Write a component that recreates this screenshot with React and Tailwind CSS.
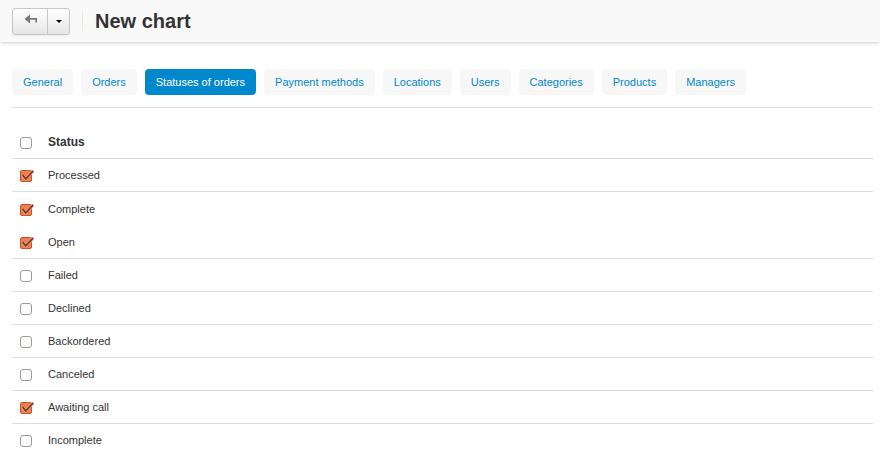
import { useState } from "react";

const tabs = [
  "General",
  "Orders",
  "Statuses of orders",
  "Payment methods",
  "Locations",
  "Users",
  "Categories",
  "Products",
  "Managers",
];

const statuses = [
  { name: "Processed", checked: true },
  { name: "Complete", checked: true, joined: true },
  { name: "Open", checked: true, tall: true },
  { name: "Failed", checked: false },
  { name: "Declined", checked: false },
  { name: "Backordered", checked: false },
  { name: "Canceled", checked: false },
  { name: "Awaiting call", checked: true },
  { name: "Incomplete", checked: false },
];

function CheckBox({ id, label, checked, onChange }) {
  return (
    <span className="relative block h-3 w-4">
      <input
        id={id}
        type="checkbox"
        aria-label={label}
        checked={checked}
        onChange={onChange}
        className="block size-3 appearance-none rounded-[3px] border border-[#9c9a94] bg-white checked:rounded-[2px] checked:border-[#c8532b] checked:bg-[#f47b4e]"
      />
      {checked && (
        <svg
          viewBox="0 0 16 12"
          className="pointer-events-none absolute left-0 top-0 h-3 w-4"
          fill="none"
          aria-hidden="true"
        >
          <path d="M2.6 5.4 L5.8 9 L13 1" stroke="#f9ab8b" strokeWidth="3" />
          <path d="M2.6 5.2 L5.8 8.8 L13.2 0.8" stroke="#70402f" strokeWidth="1.8" />
        </svg>
      )}
    </span>
  );
}

export default function App() {
  const [active, setActive] = useState("Statuses of orders");
  const [rows, setRows] = useState(statuses);
  const allChecked = rows.every((r) => r.checked);

  const toggle = (name) =>
    setRows(rows.map((r) => (r.name === name ? { ...r, checked: !r.checked } : r)));
  const toggleAll = () => setRows(rows.map((r) => ({ ...r, checked: !allChecked })));

  return (
    <div className="bg-white font-['Liberation_Sans',Arial,sans-serif] text-[11px] leading-4 text-[#333]">
      <header className="flex h-[42px] items-center bg-[#f9f9f9] pl-3 shadow-[0_1px_4px_rgba(0,0,0,0.2)]">
        <div className="flex h-[27px] rounded-[3px] border border-[#c5c5c5] bg-linear-to-b from-white to-[#e6e6e6] shadow-[0_1px_2px_rgba(0,0,0,0.05)]">
          <button
            type="button"
            aria-label="Back"
            className="flex w-[35px] items-center justify-center border-r border-[#c5c5c5] pb-1 pl-px"
          >
            <svg viewBox="0 0 14 10" className="h-[10px] w-[14px]" aria-hidden="true">
              <path d="M0.5 5 L6 0.5 V4 H13 V8.5 H11.4 V5.8 H6 V9.5 Z" fill="#777" />
            </svg>
          </button>
          <button
            type="button"
            aria-label="More options"
            className="flex w-[21px] items-center justify-center"
          >
            <svg viewBox="0 0 6 3" className="h-[3px] w-[6px]" aria-hidden="true">
              <path d="M0 0 H6 L3 3 Z" fill="#000" />
            </svg>
          </button>
        </div>
        <div className="ml-3 h-8 w-px bg-linear-to-b from-[#f9f9f9] via-[#e2e2e2] to-[#f9f9f9]" />
        <h1 className="ml-3 text-xl font-bold leading-6">New chart</h1>
      </header>

      <main className="pl-3 pr-[7px] pt-[27px]">
        <nav className="flex flex-wrap gap-2 border-b border-[#ddd] pb-3">
          {tabs.map((tab) => (
            <a
              key={tab}
              href="#"
              onClick={(e) => {
                e.preventDefault();
                setActive(tab);
              }}
              className={
                tab === active
                  ? "rounded-[4px] bg-[#0088cc] px-[11px] py-[5px] text-white"
                  : "rounded-[4px] bg-[#f7f7f7] px-[11px] py-[5px] text-[#0088cc]"
              }
            >
              {tab}
            </a>
          ))}
        </nav>

        <table className="mt-[18px] w-full border-separate border-spacing-0">
          <thead>
            <tr>
              <th className="h-[33px] w-9 border-b border-[#ddd] pl-2 pt-px align-middle">
                <CheckBox id="all" label="Select all" checked={allChecked} onChange={toggleAll} />
              </th>
              <th className="border-b border-[#ddd] text-left text-xs font-bold">Status</th>
            </tr>
          </thead>
          <tbody>
            {rows.map((row) => {
              const line = row.joined ? "" : "border-b border-[#ddd]";
              const height = row.tall ? "h-[34px]" : "h-[33px]";
              return (
                <tr key={row.name}>
                  <td className={`w-9 pl-2 pt-[2px] align-middle ${height} ${line}`}>
                    <CheckBox
                      id={row.name}
                      label={row.name}
                      checked={row.checked}
                      onChange={() => toggle(row.name)}
                    />
                  </td>
                  <td className={`align-middle ${line}`}>
                    <label htmlFor={row.name}>{row.name}</label>
                  </td>
                </tr>
              );
            })}
          </tbody>
        </table>
      </main>
    </div>
  );
}
